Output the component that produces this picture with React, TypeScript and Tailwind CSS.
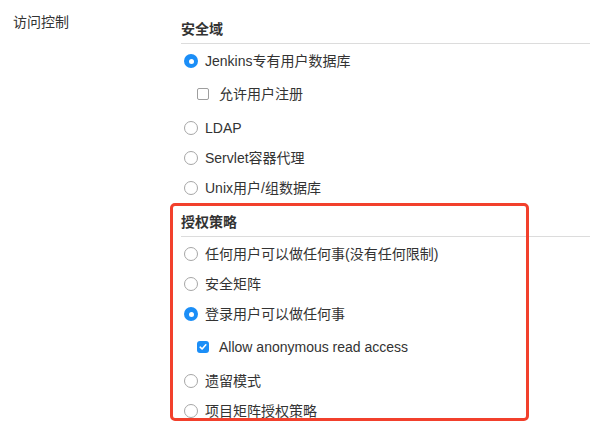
import React from 'react';

type Item = { label: string; checked?: boolean; child?: { label: string; checked: boolean } };

const realm: Item[] = [
  { label: 'Jenkins专有用户数据库', checked: true, child: { label: '允许用户注册', checked: false } },
  { label: 'LDAP' },
  { label: 'Servlet容器代理' },
  { label: 'Unix用户/组数据库' },
];

const strategy: Item[] = [
  { label: '任何用户可以做任何事(没有任何限制)' },
  { label: '安全矩阵' },
  { label: '登录用户可以做任何事', checked: true, child: { label: 'Allow anonymous read access', checked: true } },
  { label: '遗留模式' },
  { label: '项目矩阵授权策略' },
];

const Radio = ({ checked }: { checked?: boolean }) =>
  checked ? (
    <span className="w-[14px] h-[14px] rounded-full bg-[#1b8ef7] flex items-center justify-center shrink-0">
      <span className="w-[5px] h-[5px] rounded-full bg-white" />
    </span>
  ) : (
    <span className="w-[14px] h-[14px] rounded-full border border-[#a6a6a6] bg-white shrink-0" />
  );

const Checkbox = ({ checked }: { checked: boolean }) =>
  checked ? (
    <span className="w-[12px] h-[12px] rounded-[3px] bg-[#1b8ef7] flex items-center justify-center shrink-0">
      <svg width="8" height="8" viewBox="0 0 8 8" fill="none">
        <path d="M1.2 4.2 L3.1 6 L6.8 1.8" stroke="white" strokeWidth="1.6" strokeLinecap="round" strokeLinejoin="round" />
      </svg>
    </span>
  ) : (
    <span className="w-[12px] h-[12px] rounded-[2px] border border-[#9e9e9e] bg-white shrink-0" />
  );

const Heading = ({ children }: { children: React.ReactNode }) => (
  <div className="font-bold leading-5 pb-1 border-b border-[#dcdcdc]">{children}</div>
);

const Options = ({ items }: { items: Item[] }) => (
  <div className="mt-[2px]">
    {items.map((it) => (
      <React.Fragment key={it.label}>
        <div className="h-[30px] flex items-center pl-[3px] gap-[7px]">
          <Radio checked={it.checked} />
          <span>{it.label}</span>
        </div>
        {it.child && (
          <div className="h-[30px] mt-[3px] mb-[4px] flex items-center pl-[16px] gap-[10px]">
            <Checkbox checked={it.child.checked} />
            <span>{it.child.label}</span>
          </div>
        )}
      </React.Fragment>
    ))}
  </div>
);

export default function App() {
  return (
    <div
      className="w-[590px] h-[424px] bg-white flex text-[14px] text-[#333333] overflow-hidden"
      style={{ fontFamily: '"Liberation Sans", "Noto Sans CJK SC", sans-serif' }}
    >
      <div className="w-[181px] shrink-0 pl-[13px] pt-[12px] leading-5">访问控制</div>
      <div className="flex-1 pt-[19px]">
        <Heading>安全域</Heading>
        <Options items={realm} />
        <div className="relative mt-[9px]">
          <Heading>授权策略</Heading>
          <Options items={strategy} />
          <div className="absolute top-[-9px] left-[-11px] w-[359px] h-[218px] border-[3px] border-[#f2402c] rounded-[5px] pointer-events-none" />
        </div>
      </div>
    </div>
  );
}
